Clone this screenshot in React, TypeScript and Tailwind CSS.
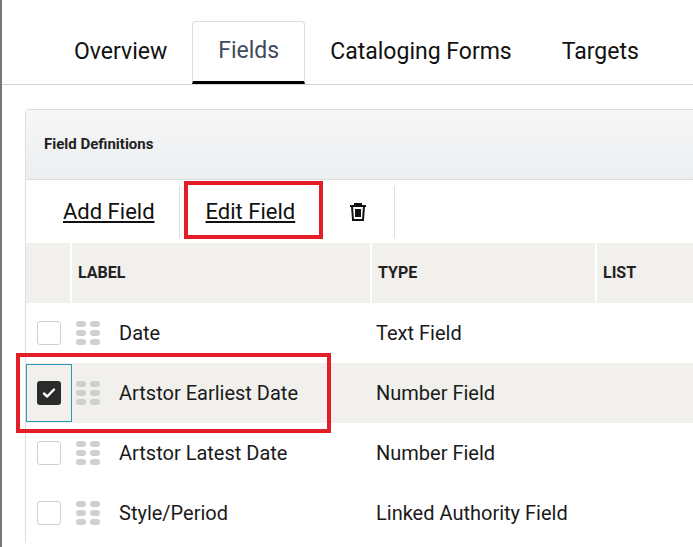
import React from "react";

const cond = { fontFamily: 'Roboto, "Liberation Sans", sans-serif' };

function Dots() {
  return (
    <div className="grid grid-cols-2 gap-x-[4px] gap-y-[3px] w-[24px]">
      {Array.from({ length: 6 }).map((_, i) => (
        <div key={i} className="w-[10px] h-[6px] rounded-full bg-[#cfcfcf]" />
      ))}
    </div>
  );
}

function Row({ label, type, checked }: { label: string; type: string; checked?: boolean }) {
  return (
    <div className={`relative flex h-[60px] items-center ${checked ? "bg-[#f1f0ed]" : "bg-white"}`}>
      <div className={`w-[46px] h-[58px] flex items-center justify-center ${checked ? "border border-[#2a9bb5]" : ""}`}>
        {checked ? (
          <div className="w-[24px] h-[24px] rounded-[3px] bg-[#2b2b2b] flex items-center justify-center">
            <svg width="14" height="12" viewBox="0 0 14 12"><path d="M2 6.5l3.2 3L12 2.5" stroke="white" strokeWidth="2.4" fill="none" strokeLinecap="round" strokeLinejoin="round" /></svg>
          </div>
        ) : (
          <div className="w-[24px] h-[24px] rounded-[3px] border border-[#cfcfcf] bg-white" />
        )}
      </div>
      <div className="ml-[4px]"><Dots /></div>
      <div className="ml-[19px] w-[257px] text-[20px] text-[#1a1a1a]">{label}</div>
      <div className="text-[20px] text-[#1a1a1a]">{type}</div>
      {checked && <div className="absolute z-10 left-[-10px] top-[-10px] w-[315px] h-[80px] border-[4px] border-[#e31e26]" />}
    </div>
  );
}

export default function App() {
  return (
    <div className="w-[693px] h-[547px] bg-white overflow-hidden border-l-2 border-[#777]" style={{ fontFamily: 'Roboto, "Liberation Sans", sans-serif' }}>
      <div className="h-[85px] border-b border-[#d4d4d4] flex items-end pl-[72px]" style={cond}>
        <div className="h-[63px] flex items-center text-[23px] text-[#111]">Overview</div>
        <div className="h-[63px] w-[113px] ml-[25px] border border-[#ddd] border-b-[3px] border-b-black rounded-t-[4px] flex items-center justify-center text-[23px] text-[#3f4a5a]">Fields</div>
        <div className="h-[63px] flex items-center text-[23px] text-[#111] ml-[25px]">Cataloging Forms</div>
        <div className="h-[63px] flex items-center text-[23px] text-[#111] ml-[50px]">Targets</div>
      </div>
      <div className="ml-[23px] mt-[24px] border-l border-t border-[#ddd] rounded-tl-[4px]">
        <div className="h-[70px] bg-gradient-to-b from-[#f7f7f7] to-[#eceef0] border-b border-[#ddd] flex items-center pl-[18px] text-[15px] font-bold text-[#222]" style={cond}>Field Definitions</div>
        <div className="h-[63px] flex items-center relative" style={cond}>
          <div className="pl-[37px] pr-[24px] text-[22px] underline text-[#111]">Add Field</div>
          <div className="w-px h-[52px] bg-[#ddd]" />
          <div className="relative px-[26px] text-[22px] underline text-[#111]">
            Edit Field
            <div className="absolute left-[4px] top-[-14px] w-[139px] h-[58px] border-[4px] border-[#e31e26]" />
          </div>
          <div className="w-px h-[52px] bg-[#ddd]" />
          <div className="w-[72px] flex justify-center">
            <svg width="18" height="20" viewBox="0 0 18 20" fill="none" stroke="#111" strokeWidth="2">
              <path d="M1 4h16M6 4V2h6v2M3 4l1 14h10l1-14M7 7v8M9 7v8M11 7v8" />
            </svg>
          </div>
          <div className="w-px h-[52px] bg-[#ddd]" />
        </div>
        <div className="h-[60px] bg-[#f1f0ed] flex text-[16px] font-bold text-[#222]" style={cond}>
          <div className="w-[46px] border-r-2 border-white" />
          <div className="w-[300px] border-r-2 border-white flex items-center pl-[6px]">LABEL</div>
          <div className="w-[225px] border-r-2 border-white flex items-center pl-[6px]">TYPE</div>
          <div className="flex-1 flex items-center pl-[6px]">LIST</div>
        </div>
        <Row label="Date" type="Text Field" />
        <Row label="Artstor Earliest Date" type="Number Field" checked />
        <Row label="Artstor Latest Date" type="Number Field" />
        <Row label="Style/Period" type="Linked Authority Field" />
      </div>
    </div>
  );
}
